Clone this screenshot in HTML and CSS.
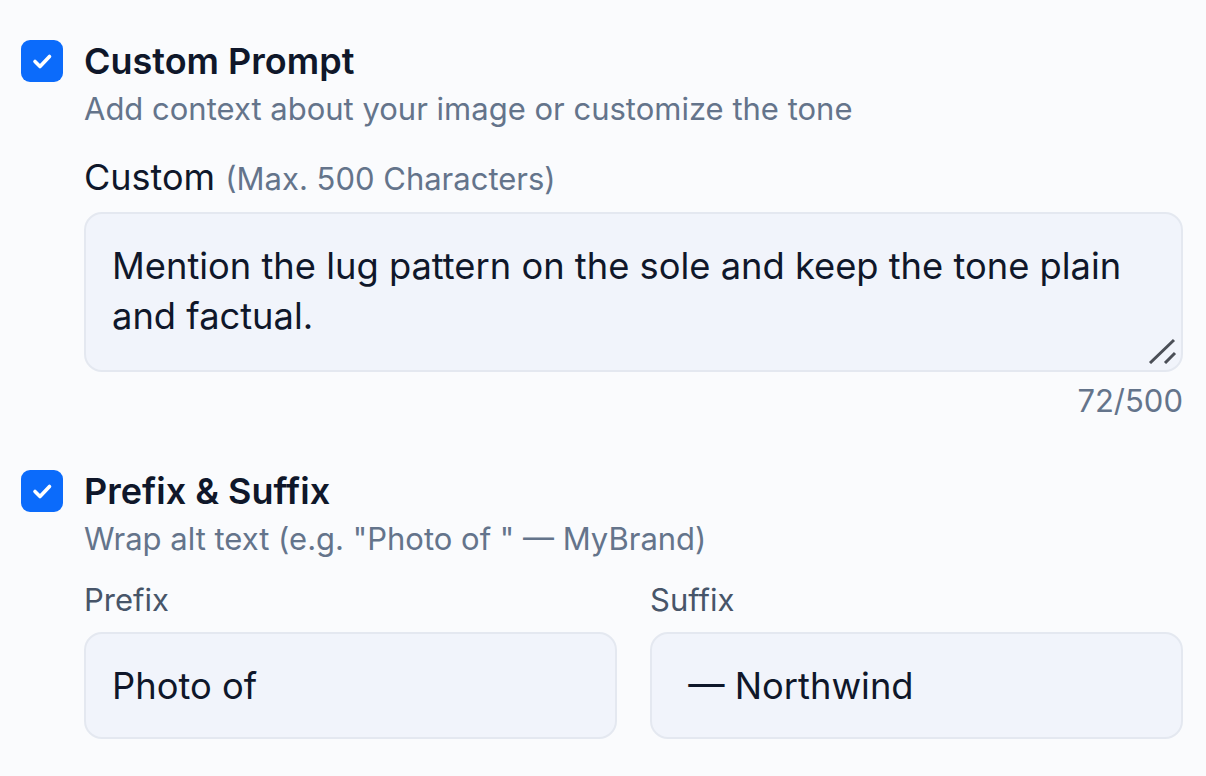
FILE: index.html
```html
<!DOCTYPE html>
<html>
<head>
<meta charset="utf-8">
<link rel="stylesheet" href="styles.css">
</head>
<body>
<div class="page">
  <section class="option">
    <div class="check"><svg viewBox="0 0 42 42" width="42" height="42"><path d="M14 21.5l5 5 9.5-10" fill="none" stroke="#fff" stroke-width="3.6" stroke-linecap="round" stroke-linejoin="round"/></svg></div>
    <div class="body">
      <h2 class="title">Custom Prompt</h2>
      <p class="desc">Add context about your image or customize the tone</p>
      <div class="field-label">Custom <span class="hint">(Max. 500 Characters)</span></div>
      <div class="textarea">Mention the lug pattern on the sole and keep the tone plain and factual.<svg class="grip" viewBox="0 0 30 26" width="30" height="26"><path d="M3 25L27 2M18 25L28 15" stroke="#4b4f57" stroke-width="3" fill="none"/></svg></div>
      <div class="counter">72/500</div>
    </div>
  </section>
  <section class="option second">
    <div class="check"><svg viewBox="0 0 42 42" width="42" height="42"><path d="M14 21.5l5 5 9.5-10" fill="none" stroke="#fff" stroke-width="3.6" stroke-linecap="round" stroke-linejoin="round"/></svg></div>
    <div class="body">
      <h2 class="title">Prefix &amp; Suffix</h2>
      <p class="desc">Wrap alt text (e.g. "Photo of " — MyBrand)</p>
      <div class="pair">
        <div class="col">
          <div class="small-label">Prefix</div>
          <div class="input">Photo of</div>
        </div>
        <div class="col">
          <div class="small-label">Suffix</div>
          <div class="input">&nbsp;— Northwind</div>
        </div>
      </div>
    </div>
  </section>
</div>
</body>
</html>
```
FILE: styles.css
```css
html, body {
  margin: 0;
  padding: 0;
  background: #fafbfd;
}
body {
  font-family: Inter, "Noto Sans", sans-serif;
  color: #0f172a;
  width: 1206px;
  height: 776px;
  overflow: hidden;
}
.page {
  padding: 40px 23px 0 21px;
}
.option {
  display: flex;
  gap: 21px;
  align-items: flex-start;
}
.option.second {
  margin-top: 49px;
}
.check {
  width: 42px;
  height: 42px;
  flex: none;
  border-radius: 9px;
  background: #0b6bfb;
  display: flex;
  align-items: center;
  justify-content: center;
}
.check svg { display: block; }
.body {
  flex: 1;
  min-width: 0;
}
.title {
  margin: 0;
  font-size: 36px;
  font-weight: 600;
  line-height: 42px;
  color: #0f172a;
}
.desc {
  margin: 7px 0 0;
  font-size: 31px;
  line-height: 40px;
  color: #64748b;
}
.field-label {
  margin-top: 26px;
  font-size: 36px;
  line-height: 44px;
  color: #0f172a;
}
.hint {
  font-size: 31px;
  color: #64748b;
}
.textarea {
  position: relative;
  margin-top: 11px;
  box-sizing: border-box;
  height: 160px;
  padding: 27px 25px 0 26px;
  background: #f1f4fb;
  border: 2px solid #e4e8f0;
  border-radius: 18px;
  font-size: 36.3px;
  line-height: 50px;
  color: #0f172a;
}
.grip {
  position: absolute;
  right: 4px;
  bottom: 6px;
}
.counter {
  text-align: right;
  margin-top: 9px;
  font-size: 31px;
  line-height: 40px;
  color: #64748b;
}
.pair {
  display: grid;
  grid-template-columns: 1fr 1fr;
  gap: 33px;
  margin-top: 21px;
}
.small-label {
  font-size: 31px;
  line-height: 40px;
  color: #475569;
}
.input {
  margin-top: 12px;
  box-sizing: border-box;
  height: 107px;
  padding: 0 26px;
  display: flex;
  align-items: center;
  background: #f1f4fb;
  border: 2px solid #e4e8f0;
  border-radius: 18px;
  font-size: 36.3px;
  color: #0f172a;
}
```
